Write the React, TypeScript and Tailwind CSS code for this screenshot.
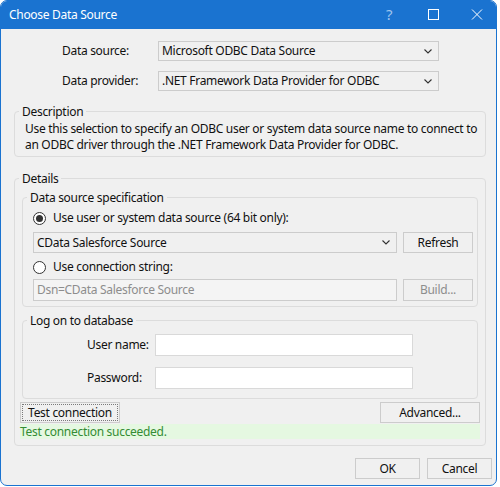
import React from 'react';

const font = { fontFamily: '"Noto Sans", "Open Sans", sans-serif' };

const Chevron: React.FC = () => (
  <svg width="8" height="5" viewBox="0 0 8 5" className="shrink-0">
    <path d="M0.5 0.5 L4 4 L7.5 0.5" fill="none" stroke="#333" strokeWidth="1.1" />
  </svg>
);

const Combo: React.FC<{ value: string; className?: string }> = ({ value, className = '' }) => (
  <div
    className={`flex items-center justify-between border border-[#cccccc] bg-[#f0f0f0] pl-[3px] pr-[6px] ${className}`}
  >
    <span>{value}</span>
    <Chevron />
  </div>
);

const Button: React.FC<{ label: string; className?: string; disabled?: boolean; focused?: boolean }> = ({
  label,
  className = '',
  disabled = false,
  focused = false,
}) => (
  <div
    className={`flex items-center justify-center border border-[#cccccc] bg-[#f0f0f0] ${
      disabled ? 'text-[#8d8d8d]' : 'text-[#111]'
    } ${focused ? 'outline-1 outline-dotted outline-offset-[-3px] outline-[#7a7a7a]' : ''} ${className}`}
  >
    {label}
  </div>
);

const Radio: React.FC<{ checked?: boolean; label: string; className?: string }> = ({
  checked = false,
  label,
  className = '',
}) => (
  <div className={`h-[16px] flex items-center gap-[7px] ${className}`}>
    <div className="w-[13px] h-[13px] rounded-full border border-[#333] bg-white flex items-center justify-center">
      {checked && <div className="w-[7px] h-[7px] rounded-full bg-[#333]" />}
    </div>
    <span>{label}</span>
  </div>
);

// group box: the title sits over the top border line
const Group: React.FC<{ title: string; className?: string; children: React.ReactNode }> = ({
  title,
  className = '',
  children,
}) => (
  <div className={`border border-[#dcdcdc] rounded-[4px] ${className}`}>
    <div className="-mt-[8px] ml-[4px] px-[3px] w-fit h-[15px] leading-[15px] bg-[#f0f0f0]">{title}</div>
    {children}
  </div>
);

export default function App() {
  return (
    <div
      className="w-[500px] h-[487px] bg-white text-[12px] tracking-[-0.3px] text-[#111]"
      style={font}
    >
      <div className="w-[497px] h-[486px] rounded-[7px] border border-[#1a73d0] bg-[#f0f0f0] overflow-hidden flex flex-col">
        {/* title bar */}
        <div className="h-[29px] -mt-[1px] bg-[#1a73d0] flex items-center text-white shrink-0">
          <span className="ml-[8px] mt-[1px] flex-1 leading-none">Choose Data Source</span>
          <span className="w-[44px] text-center text-[15px] leading-none text-[#9fc4ee]">?</span>
          <svg width="44" height="11" viewBox="0 0 44 11">
            <rect x="17.5" y="0.5" width="10" height="10" fill="none" stroke="white" strokeWidth="1" />
          </svg>
          <svg width="38" height="11" viewBox="0 0 38 11" className="ml-[3px]">
            <path d="M14 0.5 L24 10.5 M24 0.5 L14 10.5" stroke="white" strokeWidth="1" />
          </svg>
        </div>

        <div className="flex-1 flex flex-col pl-[13px]">
          {/* top rows */}
          <div className="mt-[12px] flex items-center">
            <span className="w-[96px] ml-[48px]">Data source:</span>
            <Combo value="Microsoft ODBC Data Source" className="w-[281px] h-[20px]" />
          </div>
          <div className="mt-[10px] flex items-center">
            <span className="w-[96px] ml-[48px]">Data provider:</span>
            <Combo value=".NET Framework Data Provider for ODBC" className="w-[281px] h-[20px]" />
          </div>

          {/* Description */}
          <Group title="Description" className="mt-[20px] w-[472px] h-[46px]">
            <p className="mt-[2px] pl-[10px] pr-[2px] leading-[16px]">
              Use this selection to specify an ODBC user or system data source name to connect to an ODBC driver
              through the .NET Framework Data Provider for ODBC.
            </p>
          </Group>

          {/* Details */}
          <Group title="Details" className="mt-[21px] w-[472px] h-[268px]">
            <div className="pl-[7px] flex flex-col">
              <Group title="Data source specification" className="mt-[11px] w-[456px] h-[110px]">
                <div className="pl-[10px] flex flex-col">
                  <Radio checked label="Use user or system data source (64 bit only):" className="mt-[5px]" />
                  <div className="mt-[6px] flex gap-[6px]">
                    <Combo value="CData Salesforce Source" className="w-[364px] h-[21px]" />
                    <Button label="Refresh" className="w-[70px] h-[21px]" />
                  </div>
                  <Radio label="Use connection string:" className="mt-[6px]" />
                  <div className="mt-[4px] flex gap-[6px]">
                    <div className="w-[364px] h-[22px] border border-[#cccccc] bg-[#f4f4f4] text-[#8d8d8d] flex items-center pl-[3px]">
                      Dsn=CData Salesforce Source
                    </div>
                    <Button label="Build..." disabled className="w-[70px] h-[22px]" />
                  </div>
                </div>
              </Group>

              <Group title="Log on to database" className="mt-[13px] w-[456px] h-[79px]">
                <div className="flex flex-col">
                  <div className="mt-[6px] flex items-center">
                    <span className="ml-[64px] w-[68px]">User name:</span>
                    <div className="w-[258px] h-[22px] bg-white border border-[#d9d9d9]" />
                  </div>
                  <div className="mt-[11px] flex items-center">
                    <span className="ml-[64px] w-[68px]">Password:</span>
                    <div className="w-[258px] h-[22px] bg-white border border-[#d9d9d9]" />
                  </div>
                </div>
              </Group>

              <div className="mt-[3px] -ml-[2px] w-[460px] flex justify-between">
                <Button label="Test connection" focused className="w-[100px] h-[21px]" />
                <Button label="Advanced..." className="w-[100px] h-[21px]" />
              </div>
              <div className="mt-[1px] -ml-[2px] w-[460px] h-[15px] bg-[#e5f8e1] text-[#348c34] flex items-center">
                Test connection succeeded.
              </div>
            </div>
          </Group>

          <div className="mt-[12px] ml-[341px] flex gap-[7px]">
            <Button label="OK" className="w-[65px] h-[21px]" />
            <Button label="Cancel" className="w-[65px] h-[21px]" />
          </div>
        </div>
      </div>
    </div>
  );
}
